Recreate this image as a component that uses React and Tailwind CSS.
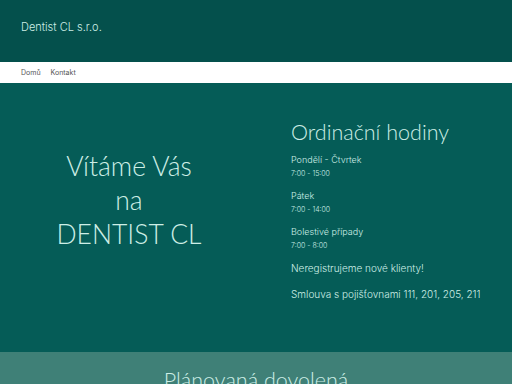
import React from "react";

const Hours = ({ day, time }) => (
  <div className="mb-[8px]">
    <div className="text-[9px] leading-[14px]">{day}</div>
    <div className="text-[7px] leading-[14px]">{time}</div>
  </div>
);

export default function App() {
  return (
    <div
      className="w-[512px] h-[384px] overflow-hidden bg-[#055c57] text-[#cdeee6]"
      style={{ fontFamily: "Inter, 'Open Sans', sans-serif" }}
    >
      <header className="h-[62px] bg-[#04504c] flex items-center px-[21px] pb-[8px]">
        <div className="text-[11px] font-light">Dentist CL s.r.o.</div>
      </header>
      <nav className="h-[21px] bg-white flex items-center gap-[10px] px-[21px] pt-[1px] text-[7px] text-[#555]">
        <span>Domů</span>
        <span>Kontakt</span>
      </nav>
      <main className="h-[269px] flex">
        <div
          className="w-[258px] flex flex-col items-center justify-center pb-[36px] text-[26.5px] font-light leading-[34px]"
          style={{ fontFamily: "Lato, Inter, sans-serif" }}
        >
          <div>Vítáme Vás</div>
          <div>na</div>
          <div>DENTIST CL</div>
        </div>
        <div className="pl-[33px] pt-[36px] font-light">
          <h2
            className="text-[21.5px] leading-[26px] mb-[8px]"
            style={{ fontFamily: "Lato, Inter, sans-serif" }}
          >
            Ordinační hodiny
          </h2>
          <Hours day="Pondělí - Čtvrtek" time="7:00 - 15:00" />
          <Hours day="Pátek" time="7:00 - 14:00" />
          <Hours day="Bolestivé případy" time="7:00 - 8:00" />
          <div className="text-[10px] leading-[14px] mt-[7px]">Neregistrujeme nové klienty!</div>
          <div className="text-[10px] leading-[14px] mt-[12px]">Smlouva s pojišťovnami 111, 201, 205, 211</div>
        </div>
      </main>
      <section className="h-[40px] bg-[#3f8077] flex justify-center pt-[14px]">
        <div
          className="text-[21.5px] font-light leading-[28px]"
          style={{ fontFamily: "Lato, Inter, sans-serif" }}
        >
          Plánovaná dovolená
        </div>
      </section>
    </div>
  );
}
